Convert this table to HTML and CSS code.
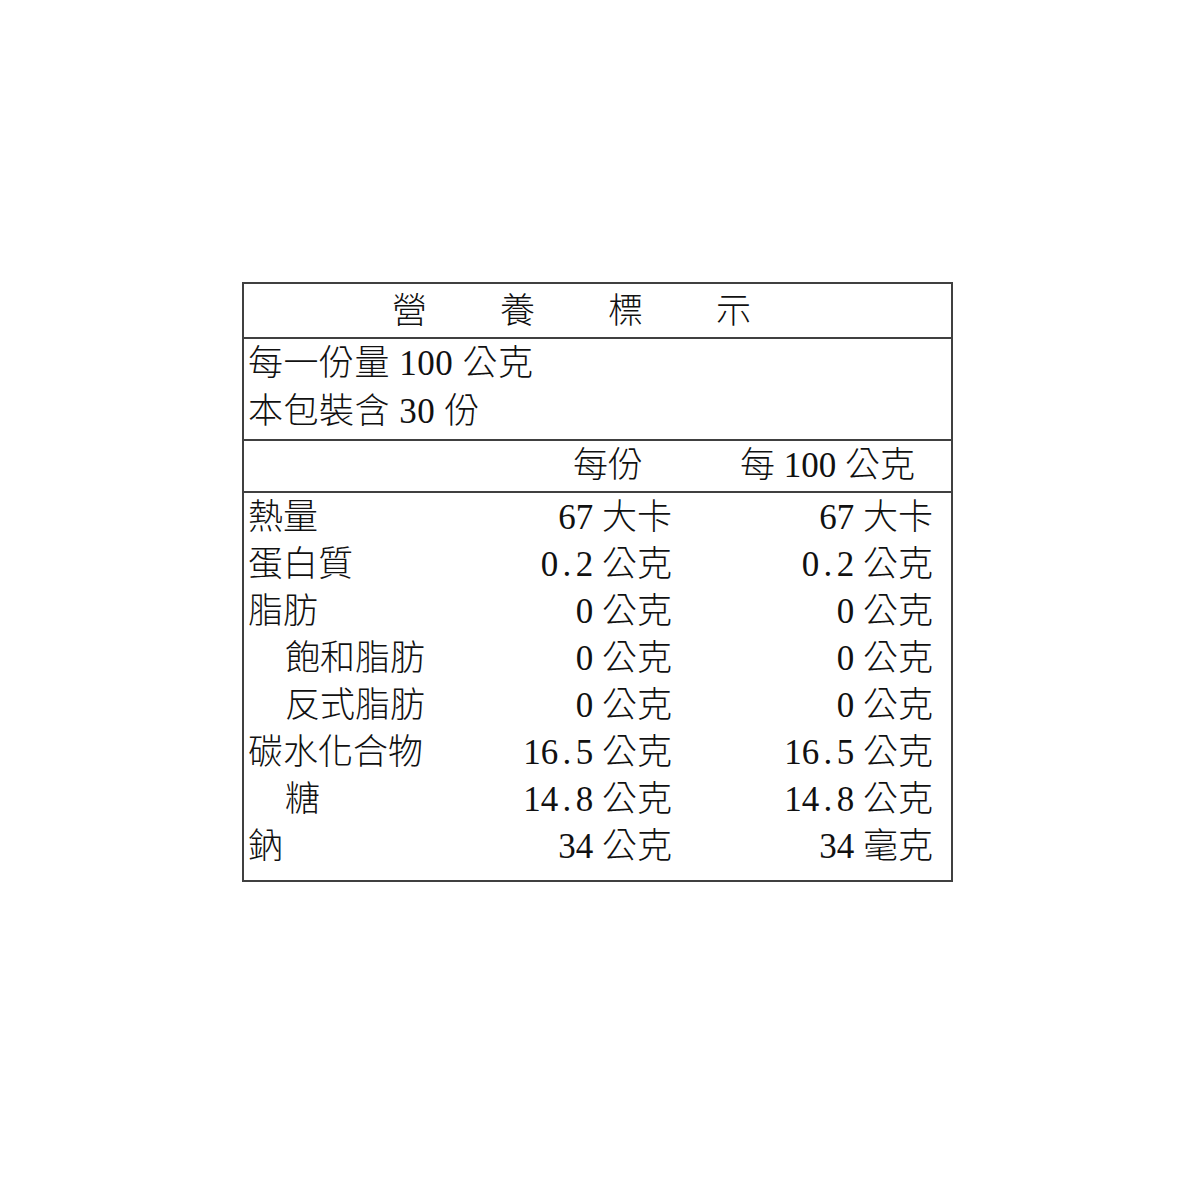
FILE: index.html
```html
<!DOCTYPE html>
<html lang="zh-Hant">
<head>
<meta charset="utf-8">
<title>營養標示</title>
<link rel="stylesheet" href="styles.css">
</head>
<body>
<div class="label">
  <div class="title">營養標示</div>
  <div class="serving">
    <div class="line">每一份量 100 公克</div>
    <div class="line">本包裝含 30 份</div>
  </div>
  <div class="grid colhead">
    <div></div>
    <div class="c1">每份</div>
    <div class="c2">每 100 公克</div>
  </div>
  <div class="grid data">
    <div class="name">熱量</div><div class="v">67 大卡</div><div class="v">67 大卡</div>
    <div class="name">蛋白質</div><div class="v">0<span class="dot">.</span>2 公克</div><div class="v">0<span class="dot">.</span>2 公克</div>
    <div class="name">脂肪</div><div class="v">0 公克</div><div class="v">0 公克</div>
    <div class="name sub">飽和脂肪</div><div class="v">0 公克</div><div class="v">0 公克</div>
    <div class="name sub">反式脂肪</div><div class="v">0 公克</div><div class="v">0 公克</div>
    <div class="name">碳水化合物</div><div class="v">16<span class="dot">.</span>5 公克</div><div class="v">16<span class="dot">.</span>5 公克</div>
    <div class="name sub">糖</div><div class="v">14<span class="dot">.</span>8 公克</div><div class="v">14<span class="dot">.</span>8 公克</div>
    <div class="name">鈉</div><div class="v">34 公克</div><div class="v">34 毫克</div>
  </div>
</div>
</body>
</html>
```
FILE: styles.css
```css
html, body {
  margin: 0;
  padding: 0;
  background: #ffffff;
}
body {
  font-family: "Liberation Serif", "Noto Sans CJK TC", serif;
  font-size: 35px;
  font-weight: 300;
  color: #111111;
}
.label {
  box-sizing: border-box;
  margin: 282px 0 0 242px;
  width: 711px;
  height: 600px;
  border: 2px solid #404040;
  display: flex;
  flex-direction: column;
}
.title {
  height: 53px;
  line-height: 55px;
  padding-left: 148px;
  letter-spacing: 73px;
  border-bottom: 2px solid #404040;
  white-space: nowrap;
}
.serving {
  height: 102px;
  box-sizing: border-box;
  padding: 1px 0 0 4px;
  border-bottom: 2px solid #404040;
  letter-spacing: 0.5px;
}
.line {
  line-height: 48px;
  white-space: nowrap;
}
.grid {
  display: grid;
  grid-template-columns: 240px 184px 261px;
  padding-left: 4px;
  padding-right: 18px;
}
.colhead {
  height: 50px;
  line-height: 50px;
  border-bottom: 2px solid #404040;
}
.colhead .c1 {
  text-align: right;
  padding-right: 29px;
  white-space: nowrap;
}
.colhead .c2 {
  text-align: right;
  padding-right: 18px;
  white-space: nowrap;
}
.data {
  grid-auto-rows: 47px;
  line-height: 49px;
  flex: 1;
  align-content: start;
}
.name {
  white-space: nowrap;
}
.name.sub {
  padding-left: 37px;
}
.v {
  text-align: right;
  white-space: nowrap;
}
.dot {
  display: inline-block;
  width: 0.5em;
  text-align: center;
}
```
